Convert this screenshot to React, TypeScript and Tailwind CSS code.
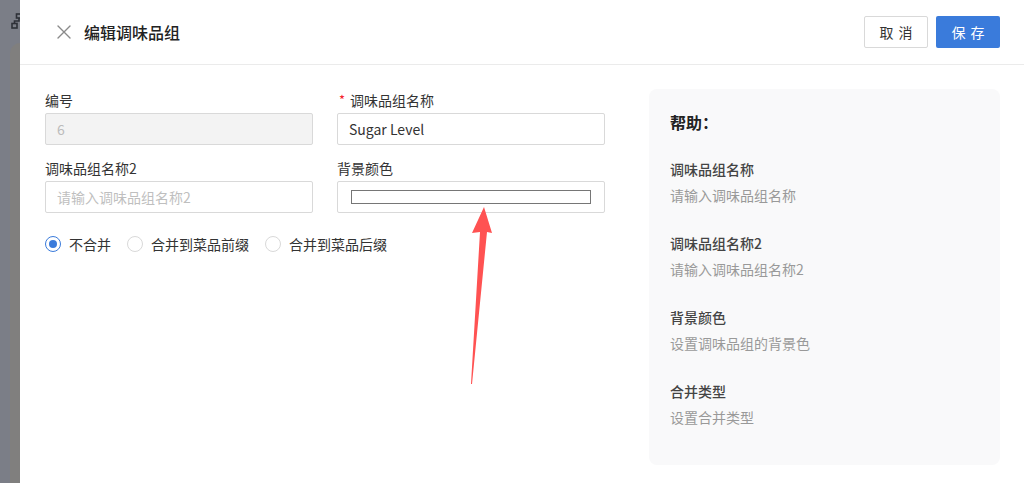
import React, { useState } from 'react';

const font = { fontFamily: '"Noto Sans CJK SC", "Noto Sans", sans-serif' };

type MergeMode = 'none' | 'prefix' | 'suffix';

const mergeOptions: { value: MergeMode; label: string }[] = [
  { value: 'none', label: '不合并' },
  { value: 'prefix', label: '合并到菜品前缀' },
  { value: 'suffix', label: '合并到菜品后缀' },
];

const helpItems = [
  { title: '调味品组名称', desc: '请输入调味品组名称' },
  { title: '调味品组名称2', desc: '请输入调味品组名称2' },
  { title: '背景颜色', desc: '设置调味品组的背景色' },
  { title: '合并类型', desc: '设置合并类型' },
];

function Field({ label, required, children }: { label: string; required?: boolean; children: React.ReactNode }) {
  return (
    <div className="flex flex-col gap-[2px]">
      <label className="text-[14px] leading-[22px] text-[#333] flex items-center">
        {required && <span className="text-[#f5222d] mr-[5px] ml-[2px] text-[13px]">*</span>}
        {label}
      </label>
      {children}
    </div>
  );
}

function Radio({ checked, label, onClick }: { checked: boolean; label: string; onClick: () => void }) {
  return (
    <button onClick={onClick} className="flex items-center gap-[8px] text-[14px] text-[#333] leading-[22px]">
      <span
        className={`w-[16px] h-[16px] rounded-full border flex items-center justify-center bg-white ${
          checked ? 'border-[#3a7bdb]' : 'border-[#d9d9d9]'
        }`}
      >
        {checked && <span className="w-[8px] h-[8px] rounded-full bg-[#3a7bdb]" />}
      </span>
      {label}
    </button>
  );
}

export default function App() {
  const [name, setName] = useState('Sugar Level');
  const [name2, setName2] = useState('');
  const [merge, setMerge] = useState<MergeMode>('none');

  return (
    <div className="relative flex h-[483px] w-[1024px] overflow-hidden" style={font}>
      {/* dimmed page behind the drawer */}
      <div className="w-[20px] shrink-0 bg-[#7b7e87] relative overflow-hidden">
        <svg className="absolute left-[11px] top-[13px]" width="16" height="16" viewBox="0 0 16 16" fill="none" stroke="#2e3138" strokeWidth="1.6">
          <rect x="5.5" y="1" width="5" height="4" />
          <rect x="1" y="10.5" width="5" height="4.5" />
          <path d="M8 5v3H3.5v2.5" />
        </svg>
        <div className="absolute left-[10px] top-[43px] w-[40px] h-[460px] rounded-tl-[10px] bg-[#807f7e]" />
      </div>

      <div className="flex-1 bg-white flex flex-col">
        {/* header */}
        <div className="h-[65px] shrink-0 border-b border-[#ebebeb] flex items-center pl-[37px] pr-[24px]">
          <svg width="14" height="14" viewBox="0 0 14 14" stroke="#8a8a8a" strokeWidth="1.4" strokeLinecap="round">
            <path d="M1 1l12 12M13 1L1 13" />
          </svg>
          <h1 className="ml-[13px] text-[16px] font-medium text-[#222] leading-[24px]">编辑调味品组</h1>
          <div className="ml-auto flex items-center gap-[8px]">
            <button className="w-[64px] h-[32px] border border-[#d9d9d9] rounded-[2px] bg-white text-[14px] text-[#333] tracking-[5px] pl-[5px]">
              取消
            </button>
            <button className="w-[64px] h-[32px] rounded-[2px] bg-[#3a7bdb] text-[14px] text-white tracking-[5px] pl-[5px]">
              保存
            </button>
          </div>
        </div>

        {/* body */}
        <div className="flex-1 flex pl-[25px] pr-[24px] pt-[24px] pb-[18px]">
          <div className="w-[560px] shrink-0">
            <div className="grid grid-cols-2 gap-x-[24px] gap-y-[12px]">
              <Field label="编号">
                <input
                  disabled
                  value="6"
                  className="h-[32px] border border-[#d9d9d9] rounded-[2px] bg-[#f3f3f3] px-[11px] text-[14px] text-[#bbb] outline-none"
                />
              </Field>
              <Field label="调味品组名称" required>
                <input
                  value={name}
                  onChange={e => setName(e.target.value)}
                  className="h-[32px] border border-[#d9d9d9] rounded-[2px] bg-white px-[11px] text-[14px] text-[#333] outline-none"
                />
              </Field>
              <Field label="调味品组名称2">
                <input
                  value={name2}
                  onChange={e => setName2(e.target.value)}
                  placeholder="请输入调味品组名称2"
                  className="h-[32px] border border-[#d9d9d9] rounded-[2px] bg-white px-[11px] text-[14px] text-[#333] placeholder:text-[#bfbfbf] outline-none"
                />
              </Field>
              <Field label="背景颜色">
                <div className="h-[32px] border border-[#d9d9d9] rounded-[2px] bg-white px-[13px] flex items-center">
                  <div className="w-full h-[14px] border border-[#767676] bg-white" />
                </div>
              </Field>
            </div>

            <div className="mt-[20px] flex items-center gap-[16px]">
              {mergeOptions.map(o => (
                <Radio key={o.value} checked={merge === o.value} label={o.label} onClick={() => setMerge(o.value)} />
              ))}
            </div>
          </div>

          {/* help panel */}
          <div className="ml-auto w-[351px] h-[376px] rounded-[8px] bg-[#f9f9fa] pl-[21px] pt-[21px]">
            <h2 className="text-[16px] leading-[24px] font-bold text-[#222]">帮助：</h2>
            <div className="mt-[24px] flex flex-col gap-[26px]">
              {helpItems.map(item => (
                <div key={item.title} className="flex flex-col gap-[4px]">
                  <p className="text-[14px] leading-[22px] font-medium text-[#444]">{item.title}</p>
                  <p className="text-[14px] leading-[22px] text-[#999]">{item.desc}</p>
                </div>
              ))}
            </div>
          </div>
        </div>
      </div>

      {/* red pointer arrow */}
      <svg className="absolute left-0 top-0 pointer-events-none" width="1024" height="483">
        <polygon points="484,207 492,233 487,232 472,384 471,384 480,232 472,233" fill="#ff5252" />
      </svg>
    </div>
  );
}
